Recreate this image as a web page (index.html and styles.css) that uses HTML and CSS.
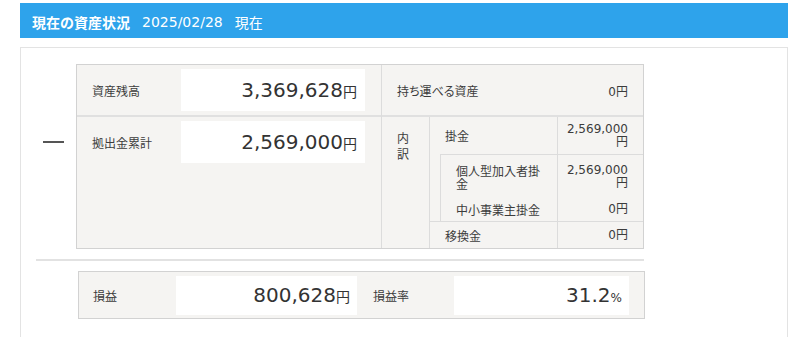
FILE: index.html
```html
<!DOCTYPE html>
<html lang="ja">
<head>
    <meta charset="UTF-8">
    <meta name="viewport" content="width=device-width, initial-scale=1.0">
    <title>現在の資産状況</title>
    <link rel="stylesheet" href="styles.css">
</head>
<body>
    <div class="status-bar">
        <strong class="status-title">現在の資産状況</strong>
        <span class="status-date">2025/02/28</span>
        <span class="status-now">現在</span>
    </div>

    <div class="status-panel">
        <div class="calc-row">
            <div class="operator"><span class="minus"></span></div>

            <div class="summary">
                <div class="summary-main">
                    <div class="line first">
                        <div class="label">資産残高</div>
                        <div class="amount">3,369,628<small>円</small></div>
                    </div>
                    <div class="line">
                        <div class="label">拠出金累計</div>
                        <div class="amount">2,569,000<small>円</small></div>
                    </div>
                </div>

                <div class="summary-detail">
                    <div class="portable">
                        <span class="portable-label">持ち運べる資産</span>
                        <span class="portable-value">0円</span>
                    </div>
                    <div class="breakdown">
                        <div class="breakdown-head">内<br>訳</div>
                        <div class="breakdown-body">
                            <div class="item item-main">
                                <div class="item-label">掛金</div>
                                <div class="item-value">2,569,000円</div>
                            </div>
                            <div class="sub">
                                <div class="item item-tall">
                                    <div class="item-label">個人型加入者掛金</div>
                                    <div class="item-value">2,569,000円</div>
                                </div>
                                <div class="item item-short">
                                    <div class="item-label">中小事業主掛金</div>
                                    <div class="item-value">0円</div>
                                </div>
                            </div>
                            <div class="item item-last">
                                <div class="item-label">移換金</div>
                                <div class="item-value">0円</div>
                            </div>
                        </div>
                    </div>
                </div>
            </div>
        </div>

        <div class="rule"></div>

        <div class="result">
            <div class="result-label">損益</div>
            <div class="result-amount wide">800,628<small>円</small></div>
            <div class="result-label second">損益率</div>
            <div class="result-amount">31.2<small class="pct">%</small></div>
        </div>
    </div>
</body>
</html>
```

FILE: styles.css
```css
body {
    margin: 0;
    padding: 3px 12px 0 20px;
    font-family: "DejaVu Sans", "Noto Sans CJK JP", sans-serif;
    color: #333;
    background: #fff;
}

/* blue title bar */
.status-bar {
    display: flex;
    gap: 12px;
    height: 35px;
    box-sizing: border-box;
    padding: 9px 12px 0;
    background: #2ea3eb;
    color: #fff;
    font-size: 14px;
    line-height: 20px;
}

.status-title {
    font-family: "Noto Sans CJK JP", sans-serif;
    font-weight: bold;
}

.status-now {
    font-family: "Noto Sans CJK JP", sans-serif;
}

.status-panel {
    margin-top: 9px;
    border: 1px solid #e3e3e3;
    padding: 16px 0 30px;
}

.calc-row {
    display: flex;
}

.operator {
    width: 55px;
    padding: 77px 0 0 22px;
    box-sizing: border-box;
}

.minus {
    display: block;
    width: 21px;
    height: 2px;
    background: #555;
}

/* summary table */
.summary {
    display: flex;
    width: 568px;
    box-sizing: border-box;
    border: 1px solid #d2d2d2;
    background: #f5f4f2;
}

.summary-main {
    width: 305px;
    box-sizing: border-box;
    border-right: 1px solid #dcdcdc;
}

.line {
    display: flex;
    align-items: center;
    padding: 4px 16px 4px 0;
}

.line.first {
    border-bottom: 2px solid #e0e0e0;
}

.label {
    width: 104px;
    box-sizing: border-box;
    padding-left: 15px;
    font-family: "Noto Sans CJK JP", sans-serif;
    font-size: 12px;
    color: #3c3c3c;
}

.amount {
    width: 184px;
    height: 42px;
    box-sizing: border-box;
    padding-right: 8px;
    background: #fff;
    text-align: right;
    font-size: 20px;
    line-height: 42px;
}

.amount small,
.result-amount small {
    font-family: "Noto Sans CJK JP", sans-serif;
    font-size: 14px;
    line-height: 1;
}

.summary-detail {
    flex: 1;
}

.portable {
    display: flex;
    align-items: center;
    justify-content: space-between;
    height: 50px;
    padding: 0 15px;
    border-bottom: 2px solid #e0e0e0;
    font-size: 12px;
    color: #3c3c3c;
}

.portable-label {
    font-family: "Noto Sans CJK JP", sans-serif;
    font-feature-settings: "palt";
}

.breakdown {
    display: flex;
}

.breakdown-head {
    width: 48px;
    box-sizing: border-box;
    padding: 13px 0 0 15px;
    border-right: 1px solid #dcdcdc;
    font-family: "Noto Sans CJK JP", sans-serif;
    font-size: 12px;
    line-height: 16px;
    color: #3c3c3c;
}

.breakdown-body {
    flex: 1;
}

.item {
    display: flex;
    font-size: 12px;
    line-height: 13px;
    color: #3c3c3c;
}

.item-label {
    flex: 1;
    display: flex;
    align-items: center;
    padding: 0 10px 0 15px;
    font-family: "Noto Sans CJK JP", sans-serif;
}

.item-value {
    display: flex;
    align-items: center;
    justify-content: flex-end;
    width: 86px;
    box-sizing: border-box;
    padding: 0 15px 0 5px;
    border-left: 1px solid #dcdcdc;
    text-align: right;
}

.item-main {
    height: 37px;
}

.sub {
    margin-left: 10px;
    border-left: 1px solid #dcdcdc;
    border-top: 1px solid #dcdcdc;
}

.item-tall {
    height: 43px;
}

.item-short {
    height: 23px;
}

.item-last {
    height: 27px;
    box-sizing: border-box;
    border-top: 1px solid #dcdcdc;
}

.rule {
    width: 608px;
    margin: 10px 0 0 15px;
    border-top: 2px solid #e2e2e2;
}

/* profit row */
.result {
    display: flex;
    align-items: center;
    width: 567px;
    box-sizing: border-box;
    margin: 10px 0 0 57px;
    padding: 4px 15px 3px 0;
    border: 1px solid #d2d2d2;
    background: #f5f4f2;
}

.result-label {
    width: 97px;
    box-sizing: border-box;
    padding-left: 14px;
    font-family: "Noto Sans CJK JP", sans-serif;
    font-size: 12px;
    color: #3c3c3c;
}

.result-label.second {
    padding-left: 16px;
}

.result-amount {
    width: 175px;
    height: 39px;
    box-sizing: border-box;
    padding-right: 7px;
    background: #fff;
    text-align: right;
    font-size: 20px;
    line-height: 39px;
}

.result-amount.wide {
    width: 181px;
}

.result-amount .pct {
    font-family: "DejaVu Sans", sans-serif;
    font-size: 12px;
}
```
